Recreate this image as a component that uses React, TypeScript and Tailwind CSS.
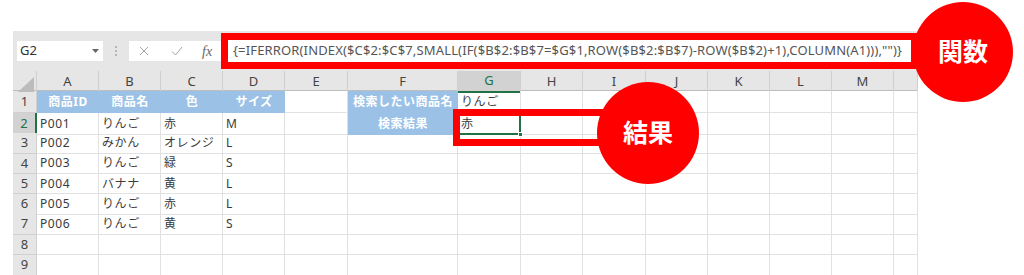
import React from "react";

const cols = ["A", "B", "C", "D", "E", "F", "G", "H", "I", "J", "K", "L", "M", ""];

type Cell = { text?: string; head?: boolean; center?: boolean };

const rows: Cell[][] = [
  [
    { text: "商品ID", head: true },
    { text: "商品名", head: true },
    { text: "色", head: true },
    { text: "サイズ", head: true },
    {},
    { text: "検索したい商品名", head: true },
    { text: "りんご" },
  ],
  [{ text: "P001" }, { text: "りんご" }, { text: "赤" }, { text: "M" }, {}, { text: "検索結果", head: true }, { text: "赤" }],
  [{ text: "P002" }, { text: "みかん" }, { text: "オレンジ" }, { text: "L" }],
  [{ text: "P003" }, { text: "りんご" }, { text: "緑" }, { text: "S" }],
  [{ text: "P004" }, { text: "バナナ" }, { text: "黄" }, { text: "L" }],
  [{ text: "P005" }, { text: "りんご" }, { text: "赤" }, { text: "L" }],
  [{ text: "P006" }, { text: "りんご" }, { text: "黄" }, { text: "S" }],
  [],
  [],
];

const gridCols =
  "grid grid-cols-[24px_62px_62px_62px_62px_63px_110px_63px_62px_63px_62px_62px_62px_62px_24px]";

function FormulaBar() {
  return (
    <div className="flex h-[40px] items-center">
      <div className="ml-[4px] flex h-[20px] w-[86px] items-center justify-between bg-white pl-[3px] pr-[4px] text-[13px] text-[#333]">
        <span>G2</span>
        <svg width="7" height="4" viewBox="0 0 7 4">
          <path d="M0 0h7L3.5 4z" fill="#666" />
        </svg>
      </div>
      <div className="ml-[12px] flex w-[3px] flex-col gap-[2px]">
        <span className="h-[2px] w-[2px] bg-[#b5b5b5]" />
        <span className="h-[2px] w-[2px] bg-[#b5b5b5]" />
        <span className="h-[2px] w-[2px] bg-[#b5b5b5]" />
      </div>
      <div className="ml-[11px] flex h-[20px] w-[92px] items-center bg-white">
        <svg className="ml-[10px]" width="10" height="10" viewBox="0 0 10 10">
          <path d="M1 1l8 8M9 1l-8 8" stroke="#a6a6a6" strokeWidth="1" fill="none" />
        </svg>
        <svg className="ml-[22px]" width="12" height="10" viewBox="0 0 12 10">
          <path d="M1 5.5l3.5 3.5L11 1" stroke="#a6a6a6" strokeWidth="1" fill="none" />
        </svg>
        <span className="ml-[19px] font-['Liberation_Serif',serif] text-[14px] italic text-[#666]">fx</span>
      </div>
      <div className="flex h-[36px] flex-1 items-center overflow-hidden whitespace-nowrap border-[7px] border-[#ff0000] bg-white pl-[5px] text-[13px] tracking-[0.15px] text-[#555]">
        {'{=IFERROR(INDEX($C$2:$C$7,SMALL(IF($B$2:$B$7=$G$1,ROW($B$2:$B$7)-ROW($B$2)+1),COLUMN(A1))),"")}'}
      </div>
    </div>
  );
}

function HeaderRow() {
  return (
    <div className={`${gridCols} h-[20px] border-b border-[#bdbdbd] text-[13px] text-[#444]`}>
      <div className="relative border-r border-[#cfcfcf]">
        <svg className="absolute right-[2px] bottom-[1px]" width="16" height="15" viewBox="0 0 16 15">
          <path d="M16 0V15H0z" fill="#bcbcbc" />
        </svg>
      </div>
      {cols.map((c, i) =>
        c === "G" ? (
          <div key={i} className="flex items-center justify-center border-r border-b-2 border-r-[#cfcfcf] border-b-[#217346] bg-[#d2d2d2] text-[#217346]">
            {c}
          </div>
        ) : (
          <div key={i} className="flex items-center justify-center border-r border-[#cfcfcf]">
            {c}
          </div>
        )
      )}
    </div>
  );
}

function DataRow({ cells, n }: { cells: Cell[]; n: number }) {
  const selRow = n === 2;
  return (
    <div className={`${gridCols} ${n === 1 ? "h-[22px]" : "h-[20.3px]"} bg-white text-[12px] text-[#3a3a3a]`}>
      <div
        className={
          selRow
            ? "flex items-center justify-center border-b border-r-2 border-b-[#d0d0d0] border-r-[#217346] bg-[#d2d2d2] text-[13px] text-[#217346]"
            : "flex items-center justify-center border-b border-r border-[#d0d0d0] bg-[#e6e6e6] text-[13px] text-[#444]"
        }
      >
        {n}
      </div>
      {cols.map((_, i) => {
        const cell = cells[i] || {};
        if (cell.head) {
          return (
            <div key={i} className="flex items-center justify-center bg-[#9bc2e6] font-bold tracking-[0.5px] text-white">
              {cell.text}
            </div>
          );
        }
        if (selRow && i === 6) {
          return (
            <div key={i} className="relative flex items-center border-2 border-[#217346] pl-[1px]">
              {cell.text}
              <span className="absolute right-[-4px] bottom-[-4px] h-[5px] w-[5px] border border-white bg-[#217346]" />
            </div>
          );
        }
        return (
          <div key={i} className="flex items-center overflow-hidden whitespace-nowrap border-r border-b border-[#e1e1e1] pl-[3px] tracking-[0.6px]">
            {cell.text}
          </div>
        );
      })}
    </div>
  );
}

function Badge({ label, className }: { label: string; className: string }) {
  return (
    <div className={`absolute flex items-center justify-center rounded-full bg-[#ff0000] text-[25px] font-bold text-white ${className}`}>
      {label}
    </div>
  );
}

export default function App() {
  return (
    <div className="relative h-[275px] w-[1024px] overflow-hidden bg-white font-['Noto_Sans','Noto_Sans_CJK_JP',sans-serif]">
      <div className="ml-[13px] mt-[31px] w-[905px] bg-[#e6e6e6]">
        <FormulaBar />
        <HeaderRow />
        {rows.map((r, i) => (
          <DataRow key={i} cells={r} n={i + 1} />
        ))}
      </div>

      <div className="absolute left-[453px] top-[109px] h-[37px] w-[170px] border-[7px] border-[#ff0000]" />
      <Badge label="関数" className="left-[913px] top-[2px] h-[100px] w-[100px]" />
      <Badge label="結果" className="left-[597px] top-[82px] h-[102px] w-[102px]" />
    </div>
  );
}
